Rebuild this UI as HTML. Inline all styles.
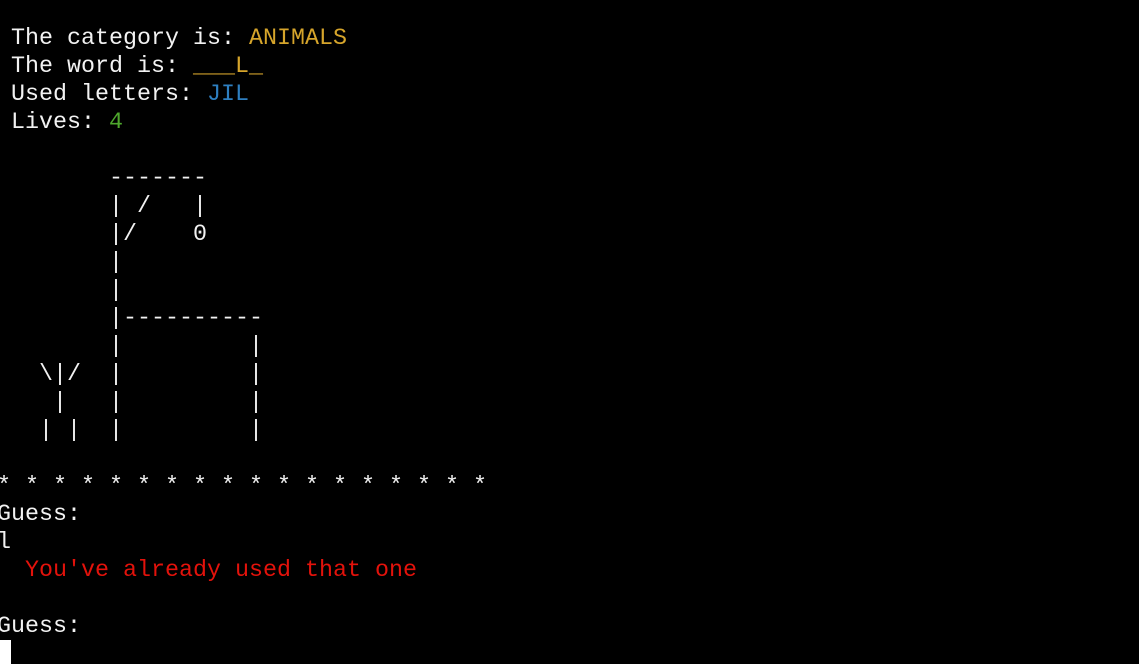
<!DOCTYPE html>
<html><head><style>
html,body{margin:0;padding:0;background:#000;width:1139px;height:664px;overflow:hidden}
pre{margin:0;position:absolute;font-family:"Liberation Mono",monospace;font-size:23.33px;line-height:28px;color:#f2f2f2;white-space:pre}
.y{color:#d6a52b}.b{color:#2e7fc0}.g{color:#4ea72c}.r{color:#e3120b}
#cur{position:absolute;left:0;top:640px;width:11px;height:24px;background:#fff}
</style></head><body>
<pre style="left:11px;top:25px">The category is: <span class="y">ANIMALS</span>
The word is: <span class="y">___L_</span>
Used letters: <span class="b">JIL</span>
Lives: <span class="g">4</span>

       -------
       | /   |
       |/    0
       |
       |
       |----------
       |         |
  \|/  |         |
   |   |         |
  | |  |         |</pre>
<pre style="left:-3px;top:473px">* * * * * * * * * * * * * * * * * *
Guess:
l
  <span class="r">You've already used that one</span>

Guess:</pre>
<div id="cur"></div>
</body></html>
